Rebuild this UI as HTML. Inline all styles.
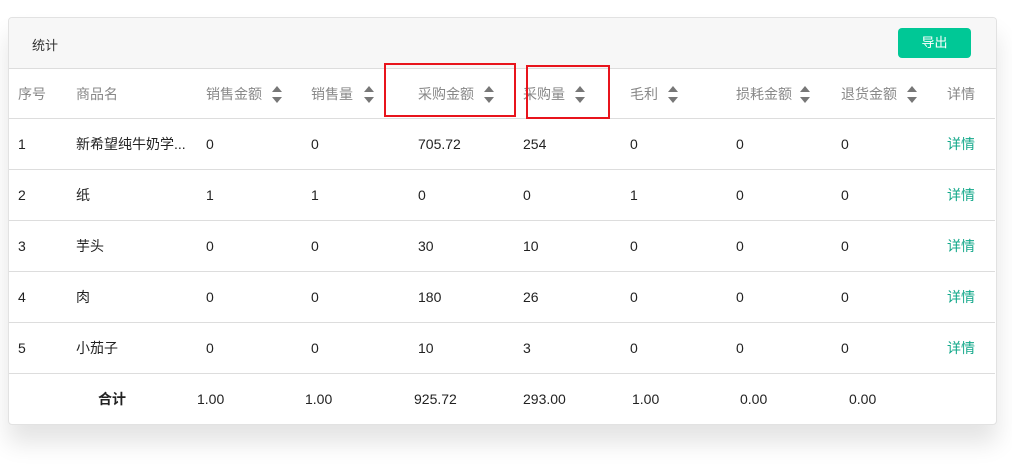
<!DOCTYPE html><html><head><meta charset="utf-8"><style>
body{margin:0;width:1012px;height:464px;background:#fff;font-family:"Liberation Sans","Noto Sans CJK SC",sans-serif;font-size:14px;color:#333;position:relative;overflow:hidden}
.card{position:absolute;left:8px;top:17px;width:987px;height:406px;border:1px solid #e2e2e2;border-radius:4px;box-shadow:0 18px 24px rgba(0,0,0,.11);background:#fff;overflow:hidden}
.hd{position:absolute;left:0;top:0;right:0;height:50px;background:#f7f7f7;border-bottom:1px solid #ddd}
.t{position:absolute;white-space:nowrap}
.btn{position:absolute;left:889px;top:10px;width:73px;height:30px;background:#00c896;border-radius:4px;color:#fff;text-align:center;line-height:30px;font-size:13px}
.s{position:absolute;width:0;height:0;border-left:5px solid transparent;border-right:5px solid transparent}
.red{position:absolute;border:2px solid #e8141c}
</style></head><body>
<div class="card">
<div class="hd"><span class="t" style="left:23px;top:17px;font-size:13px">统计</span><div class="btn">导出</div></div>
</div>
<div id="g"></div>
<script>
var cols=[18,76,206,311,418,523,630,736,841,947];
var hdr=["序号","商品名","销售金额","销售量","采购金额","采购量","毛利","损耗金额","退货金额","详情"];
var sorts=[272,364,484,575,668,800,907];
var data=[["1","新希望纯牛奶学...","0","0","705.72","254","0","0","0","详情"],["2","纸","1","1","0","0","1","0","0","详情"],["3","芋头","0","0","30","10","0","0","0","详情"],["4","肉","0","0","180","26","0","0","0","详情"],["5","小茄子","0","0","10","3","0","0","0","详情"]];
var h="";
var tops=[68,119,170,221,272,323];
for(var r=0;r<6;r++){h+='<div style="position:absolute;left:9px;width:986px;top:'+(tops[r]+50)+'px;height:1px;background:#ddd"></div>';}
hdr.forEach(function(c,i){h+='<span class="t" style="left:'+cols[i]+'px;top:84px;color:#888">'+c+'</span>';});
sorts.forEach(function(x){h+='<div class="s" style="left:'+x+'px;top:86px;border-bottom:6px solid #777"></div><div class="s" style="left:'+x+'px;top:97px;border-top:6px solid #777"></div>';});
data.forEach(function(row,r){row.forEach(function(c,i){var cj=(i==1||i==9);h+='<span class="t" style="left:'+cols[i]+'px;top:'+((cj?134:136)+51*r)+'px;'+(i==9?'color:#13a88a':'color:#222')+'">'+c+'</span>';});});
var f=[[98,"合计"],[197,"1.00"],[305,"1.00"],[414,"925.72"],[523,"293.00"],[632,"1.00"],[740,"0.00"],[849,"0.00"]];
f.forEach(function(p,i){h+='<span class="t" style="left:'+p[0]+'px;top:'+(i==0?389:391)+'px;color:#222;'+(i==0?'font-weight:bold':'')+'">'+p[1]+'</span>';});
h+='<div class="red" style="left:384px;top:63px;width:128px;height:50px"></div><div class="red" style="left:526px;top:65px;width:80px;height:50px"></div>';
document.getElementById('g').innerHTML=h;
</script>
</body></html>
